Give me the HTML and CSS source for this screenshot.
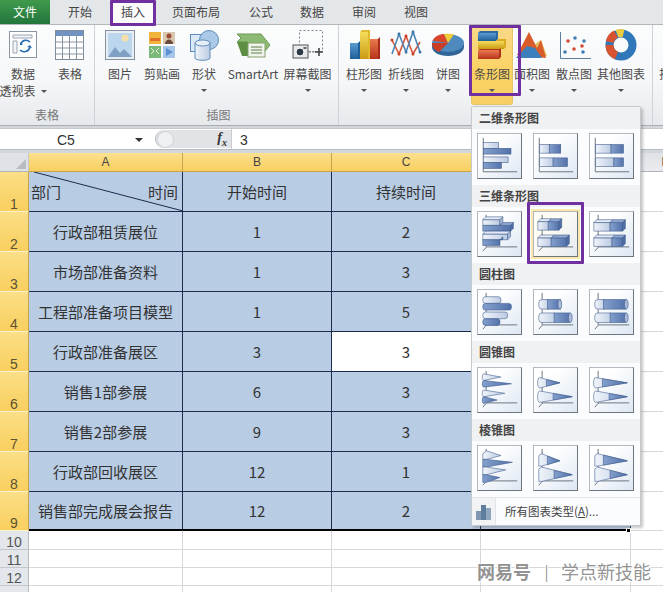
FILE: index.html
```html
<!DOCTYPE html>
<html lang="zh-CN">
<head>
<meta charset="utf-8">
<title>Excel 插入条形图</title>
<link rel="stylesheet" href="styles.css">
</head>
<body>
<svg class="defs" aria-hidden="true">
  <defs>
    <linearGradient id="gl" x1="0" y1="0" x2="1" y2="0"><stop offset="0" stop-color="#f0f4fa"/><stop offset="1" stop-color="#bccbe3"/></linearGradient>
    <linearGradient id="gd" x1="0" y1="0" x2="1" y2="0"><stop offset="0" stop-color="#84a0cd"/><stop offset="1" stop-color="#5372aa"/></linearGradient>
    <linearGradient id="gy" x1="0" y1="0" x2="0" y2="1"><stop offset="0" stop-color="#f6dc5c"/><stop offset="1" stop-color="#c99b12"/></linearGradient>
    <linearGradient id="gb" x1="0" y1="0" x2="0" y2="1"><stop offset="0" stop-color="#5b9bd0"/><stop offset="1" stop-color="#1f5f99"/></linearGradient>
    <linearGradient id="gr" x1="0" y1="0" x2="0" y2="1"><stop offset="0" stop-color="#ea7a4e"/><stop offset="1" stop-color="#b8321a"/></linearGradient>
    <symbol id="ax2" viewBox="0 0 45 46"><path d="M5.500 4V39.500H41" fill="none" stroke="#66717f"/></symbol>
    <symbol id="ax3" viewBox="0 0 45 46"><path d="M8.500 3V36.500M5 41l4-4.500H41" fill="none" stroke="#66717f"/></symbol>

    <symbol id="c3a" viewBox="0 0 45 46">
      <g stroke="#3f5b8c" stroke-width=".6">
        <path d="M5 8h18v6H5z" fill="url(#gl)"/><path d="M5 8l3-3h18l-3 3z" fill="#e3eaf5"/><path d="M23 8l3-3v6l-3 3z" fill="#a9bbd8"/>
        <path d="M5 14h29v6H5z" fill="url(#gd)"/><path d="M23 14l3-3h11l-3 3z" fill="#8ea7d0"/><path d="M34 14l3-3v6l-3 3z" fill="#4f6ea6"/>
        <path d="M5 23h26v6H5z" fill="url(#gl)"/><path d="M5 23l3-3h26l-3 3z" fill="#e3eaf5"/><path d="M31 23l3-3v6l-3 3z" fill="#a9bbd8"/>
        <path d="M5 29h18v6H5z" fill="url(#gd)"/><path d="M23 29l3-3v3z" fill="#4f6ea6"/>
      </g>
    </symbol>
    <symbol id="c3b" viewBox="0 0 45 46">
      <g stroke="#3f5b8c" stroke-width=".6">
        <path d="M4 10h11v9H4z" fill="url(#gl)"/><path d="M4 10l3-3h11l-3 3z" fill="#e3eaf5"/>
        <path d="M15 10h11v9H15z" fill="url(#gd)"/><path d="M15 10l3-3h11l-3 3z" fill="#8ea7d0"/><path d="M26 10l3-3v9l-3 3z" fill="#4f6ea6"/>
        <path d="M4 27h14v9H4z" fill="url(#gl)"/><path d="M4 27l3-3h14l-3 3z" fill="#e3eaf5"/>
        <path d="M18 27h16v9H18z" fill="url(#gd)"/><path d="M18 27l3-3h16l-3 3z" fill="#8ea7d0"/><path d="M34 27l3-3v9l-3 3z" fill="#4f6ea6"/>
      </g>
    </symbol>
    <symbol id="c3c" viewBox="0 0 45 46">
      <g stroke="#3f5b8c" stroke-width=".6">
        <path d="M4 11h17v9H4z" fill="url(#gl)"/><path d="M4 11l3-3h17l-3 3z" fill="#e3eaf5"/>
        <path d="M21 11h13v9H21z" fill="url(#gd)"/><path d="M21 11l3-3h13l-3 3z" fill="#8ea7d0"/><path d="M34 11l3-3v9l-3 3z" fill="#4f6ea6"/>
        <path d="M4 27h19v9H4z" fill="url(#gl)"/><path d="M4 27l3-3h19l-3 3z" fill="#e3eaf5"/>
        <path d="M23 27h11v9H23z" fill="url(#gd)"/><path d="M23 27l3-3h11l-3 3z" fill="#8ea7d0"/><path d="M34 27l3-3v9l-3 3z" fill="#4f6ea6"/>
      </g>
    </symbol>
  </defs>
</svg>

<div class="app">
  <nav class="tabs">
    <span class="tab tab-file">文件</span>
    <span class="tab tab-60">开始</span>
    <span class="tab tab-active">插入</span>
    <span class="tab tab-80">页面布局</span>
    <span class="tab tab-50">公式</span>
    <span class="tab tab-52">数据</span>
    <span class="tab tab-52">审阅</span>
    <span class="tab tab-52">视图</span>
  </nav>

  <section class="ribbon">
    <div class="group group-table">
      <div class="btns">
        <div class="btn w46">
          <svg class="ico" viewBox="0 0 34 34"><rect x="3.500" y="3.500" width="27" height="26" fill="#fff" stroke="#8b96a3"/><path d="M7 7h19v3H7zM7 13h4v12H7z" fill="#f3f5f8" stroke="#9aa5b1"/><path d="M14 22c3 3 9 2 10-3M24 14c-3-3-8-2-9 2" fill="none" stroke="#2a6fb3" stroke-width="1.600"/><path d="M21 19l3-2 2 3zM17 17l-3 0 0-3z" fill="#2a6fb3"/></svg>
          <span class="lbl">数据</span>
          <span class="lbl">透视表<i class="caret caret-inline"></i></span>
        </div>
        <div class="btn w48">
          <svg class="ico" viewBox="0 0 34 34"><rect x="2.500" y="2.500" width="28" height="29" fill="#fff" stroke="#7f8c99"/><rect x="3" y="3" width="27" height="5" fill="#6f93c4"/><path d="M2.500 14h28M2.500 20h28M2.500 26h28M9.500 3v28M16.500 3v28M23.500 3v28" stroke="#8a96a3" fill="none"/></svg>
          <span class="lbl">表格</span>
        </div>
      </div>
      <div class="group-name">表格</div>
    </div>

    <div class="group group-art">
      <div class="btns">
        <div class="btn w42">
          <svg class="ico" viewBox="0 0 34 34"><rect x="2.500" y="2.500" width="29" height="29" fill="#e9eef3" stroke="#8792a0"/><rect x="5" y="5" width="24" height="24" fill="#bcd6ee"/><circle cx="22" cy="10" r="3.500" fill="#f4dfa8"/><path d="M5 29l7-10 5 6 4-4 8 8z" fill="#7ea0c4"/></svg>
          <span class="lbl">图片</span>
        </div>
        <div class="btn w42">
          <svg class="ico" viewBox="0 0 34 34"><rect x="4" y="4" width="12" height="12" fill="#f2b53c"/><path d="M5 10h10v3H5z" fill="#e2702a"/><rect x="18" y="4" width="12" height="12" fill="#d9c7b0"/><circle cx="24" cy="8" r="2.500" fill="#9c4a30"/><path d="M20 16c0-6 8-6 8 0z" fill="#6a4a3c"/><rect x="4" y="18" width="12" height="12" fill="#7cb87a"/><path d="M6 20l3 3-3 3M14 20l-3 3 3 3" stroke="#e6f2d8" fill="none"/><rect x="18" y="18" width="12" height="12" fill="#a7c5ea"/><path d="M21 20l7 4-7 4z" fill="#5b8fd0"/></svg>
          <span class="lbl">剪贴画</span>
        </div>
        <div class="btn w42">
          <svg class="ico" viewBox="0 0 34 34"><rect x="3.500" y="6.500" width="17" height="17" fill="#dbe8f5" stroke="#5e8cba"/><circle cx="22" cy="12" r="9.500" fill="#a9c9e6" stroke="#5e8cba"/><path d="M8 15v15c0 3 15 3 15 0V15z" fill="url(#gl)" stroke="#5e8cba"/><ellipse cx="15.500" cy="15" rx="7.500" ry="3" fill="#e7f0f8" stroke="#5e8cba"/></svg>
          <span class="lbl">形状</span>
          <i class="caret"></i>
        </div>
        <div class="btn w56">
          <svg class="ico ico-wide" viewBox="0 0 38 34"><path d="M3 6h24l9 11-9 11H14V14H3l4-4z" fill="#8dba72" stroke="#6d9a55"/><path d="M3 14h11v14H8z" fill="#5c8f44"/><rect x="14" y="15" width="17" height="14" fill="#f1f4ec" stroke="#84a06e"/><path d="M17 19h11M17 22h11M17 25h11" stroke="#5b7f49"/></svg>
          <span class="lbl">SmartArt</span>
        </div>
        <div class="btn w53">
          <svg class="ico" viewBox="0 0 34 34"><rect x="8.500" y="2.500" width="23" height="21" fill="none" stroke="#7d8894" stroke-dasharray="2 2"/><rect x="2" y="17" width="15" height="13" fill="#e5e8ec" stroke="#555"/><circle cx="9" cy="24" r="4" fill="#2f3a48" stroke="#fff"/><rect x="12.500" y="19" width="3" height="2" fill="#666"/><path d="M18 24h7" stroke="#777" stroke-dasharray="2 1"/><path d="M28 20v8M24 24h8" stroke="#444" stroke-width="1.600"/></svg>
          <span class="lbl">屏幕截图</span>
          <i class="caret"></i>
        </div>
      </div>
      <div class="group-name">插图</div>
    </div>

    <div class="group group-chart">
      <div class="btns">
        <div class="btn w42">
          <svg class="ico" viewBox="0 0 34 34"><path d="M3 15h8v16H3z" fill="url(#gb)"/><path d="M11 15l2-2v18h-2z" fill="#1f5f99"/><path d="M13 4h8v27h-8z" fill="url(#gy)"/><path d="M13 4l2-2h8l-2 2zM21 4l2-2v29h-2z" fill="#e0b92a"/><path d="M23 11h8v20h-8z" fill="url(#gr)"/><path d="M31 11l2-2v22h-2z" fill="#a52c15"/></svg>
          <span class="lbl">柱形图</span>
          <i class="caret"></i>
        </div>
        <div class="btn w42">
          <svg class="ico" viewBox="0 0 34 34"><path d="M3 12l7 14 7-18 7 18 7-12" fill="none" stroke="#d8543a" stroke-width="1.600"/><path d="M3 26l7-20 7 18 7-20 7 20" fill="none" stroke="#4c86b5" stroke-width="1.600"/><g fill="#3d78a8"><circle cx="10" cy="6" r="1.500"/><circle cx="24" cy="4" r="1.500"/><circle cx="17" cy="24" r="1.500"/><circle cx="31" cy="24" r="1.500"/></g><g fill="#c83f28"><circle cx="3" cy="12" r="1.500"/><circle cx="17" cy="8" r="1.500"/><circle cx="10" cy="26" r="1.500"/><circle cx="24" cy="26" r="1.500"/></g></svg>
          <span class="lbl">折线图</span>
          <i class="caret"></i>
        </div>
        <div class="btn w42">
          <svg class="ico" viewBox="0 0 34 34"><path d="M1 19c0 5 7 9 16 9s16-4 16-9v-3H1z" fill="#2e6498"/><ellipse cx="17" cy="15" rx="16" ry="9" fill="#4f8abf"/><path d="M17 15L1.600 12.800C3 8.500 9 6 13 6z" fill="#d8472a"/><path d="M17 15L13 6c3-.5 7-.5 10 .2z" fill="#efcb3a"/><path d="M1 15c0 4 2 7 7 9l9-9z" fill="#c93e24"/></svg>
          <span class="lbl">饼图</span>
          <i class="caret"></i>
        </div>
        <div class="btn w42 btn-on">
          <svg class="ico" viewBox="0 0 34 34"><path d="M3 5h18v8H3z" fill="url(#gb)"/><path d="M3 5l2-2h18l-2 2zM21 5l2-2v8l-2 2z" fill="#2c6ba4"/><path d="M3 13h26v8H3z" fill="url(#gy)"/><path d="M21 13l2-2h8l-2 2zM29 13l2-2v8l-2 2z" fill="#d8ae20"/><path d="M3 22h21v9H3z" fill="url(#gr)"/><path d="M24 22l2-2v9l-2 2zM3 22l2-1h21l-2 1z" fill="#b13218"/></svg>
          <span class="lbl">条形图</span>
          <i class="caret"></i>
        </div>
        <div class="btn w42">
          <svg class="ico" viewBox="0 0 34 34"><path d="M20 16l6-4 6 16-8 1z" fill="#e0c05a"/><path d="M2 27L14 4l8 16 4-8 5 18z" fill="#d95a2a"/><path d="M1 30l11-12 8 2 7 10z" fill="#3d7fbc"/></svg>
          <span class="lbl">面积图</span>
          <i class="caret"></i>
        </div>
        <div class="btn w42">
          <svg class="ico" viewBox="0 0 34 34"><path d="M3.500 4v26.500H34" fill="none" stroke="#5d7f9e"/><g fill="#d04a30"><circle cx="11" cy="13" r="1.800"/><circle cx="17" cy="21" r="1.800"/><circle cx="25" cy="18" r="1.800"/></g><g fill="#3f7fb4"><circle cx="8" cy="24" r="1.800"/><circle cx="18" cy="10" r="1.800"/><circle cx="27" cy="13" r="1.800"/><circle cx="26" cy="24" r="1.800"/></g></svg>
          <span class="lbl">散点图</span>
          <i class="caret"></i>
        </div>
        <div class="btn w52">
          <svg class="ico" viewBox="0 0 34 34"><circle cx="17" cy="17" r="11.500" fill="none" stroke="#2f77b8" stroke-width="8"/><path d="M5.500 17a11.500 11.500 0 0 0 7 10.500" fill="none" stroke="#d8532f" stroke-width="8"/><path d="M5.800 14a11.500 11.500 0 0 1 6-8" fill="none" stroke="#d8532f" stroke-width="8"/><path d="M13 5.800a11.500 11.500 0 0 1 6.500-.4" fill="none" stroke="#eccb3e" stroke-width="8"/></svg>
          <span class="lbl">其他图表</span>
          <i class="caret"></i>
        </div>
      </div>
    </div>
    <div class="group group-next"><span class="lbl">折线图</span></div>
  </section>

  <div class="formula">
    <div class="namebox"><span class="name">C5</span><i class="caret caret-dark"></i></div>
    <div class="fx-pill"><span class="fx-dot"></span><span class="fx">f<sub>x</sub></span></div>
    <div class="fx-input">3</div>
  </div>

  <div class="sheet">
    <div class="corner"></div>
    <div class="col on">A</div><div class="col on">B</div><div class="col on">C</div><div class="col on">D</div><div class="col">E</div>

    <div class="rowh on">1</div>
    <div class="cell cell-diag"><svg class="diag" viewBox="0 0 154 40" preserveAspectRatio="none"><path d="M5 0L154 39" stroke="#1d2a4c" fill="none"/></svg><span>部门</span><span>时间</span></div>
    <div class="cell">开始时间</div><div class="cell">持续时间</div><div class="cell"></div><div class="blank"></div>

    <div class="rowh on">2</div>
    <div class="cell">行政部租赁展位</div><div class="cell">1</div><div class="cell">2</div><div class="cell"></div><div class="blank"></div>

    <div class="rowh on">3</div>
    <div class="cell">市场部准备资料</div><div class="cell">1</div><div class="cell">3</div><div class="cell"></div><div class="blank"></div>

    <div class="rowh on">4</div>
    <div class="cell">工程部准备项目模型</div><div class="cell">1</div><div class="cell">5</div><div class="cell"></div><div class="blank"></div>

    <div class="rowh on">5</div>
    <div class="cell">行政部准备展区</div><div class="cell">3</div><div class="cell cell-sel">3</div><div class="cell"></div><div class="blank"></div>

    <div class="rowh on">6</div>
    <div class="cell">销售1部参展</div><div class="cell">6</div><div class="cell">3</div><div class="cell"></div><div class="blank"></div>

    <div class="rowh on">7</div>
    <div class="cell">销售2部参展</div><div class="cell">9</div><div class="cell">3</div><div class="cell"></div><div class="blank"></div>

    <div class="rowh on">8</div>
    <div class="cell">行政部回收展区</div><div class="cell">12</div><div class="cell">1</div><div class="cell"></div><div class="blank"></div>

    <div class="rowh on">9</div>
    <div class="cell cell-last">销售部完成展会报告</div><div class="cell cell-last">12</div><div class="cell cell-last">2</div><div class="cell cell-last"></div><div class="blank"></div>

    <div class="rowh">10</div><div class="blank"></div><div class="blank"></div><div class="blank"></div><div class="blank"></div><div class="blank"></div>
    <div class="rowh">11</div><div class="blank"></div><div class="blank"></div><div class="blank"></div><div class="blank"></div><div class="blank"></div>
    <div class="rowh">12</div><div class="blank"></div><div class="blank"></div><div class="blank"></div><div class="blank"></div><div class="blank"></div>
    <div class="rowh rowh-13">13</div><div class="blank"></div><div class="blank"></div><div class="blank"></div><div class="blank"></div><div class="blank"></div>
  </div>

  <span class="handle"></span>

  <div class="menu">
    <div class="menu-head">二维条形图</div>
    <div class="gallery">
      <div class="gbtn"><svg viewBox="0 0 45 46"><use href="#ax2"/><g stroke="#3f5b8c" stroke-width=".6"><rect x="5.500" y="9" width="16" height="6" fill="url(#gl)"/><rect x="5.500" y="15" width="29" height="6" fill="url(#gd)"/><rect x="5.500" y="24" width="26" height="6" fill="url(#gl)"/><rect x="5.500" y="30" width="19" height="6" fill="url(#gd)"/></g></svg></div>
      <div class="gbtn"><svg viewBox="0 0 45 46"><use href="#ax2"/><g stroke="#3f5b8c" stroke-width=".6"><rect x="6" y="11" width="10" height="9" fill="url(#gl)"/><rect x="16" y="11" width="12" height="9" fill="url(#gd)"/><rect x="6" y="25" width="14" height="9" fill="url(#gl)"/><rect x="20" y="25" width="15" height="9" fill="url(#gd)"/></g></svg></div>
      <div class="gbtn"><svg viewBox="0 0 45 46"><use href="#ax2"/><g stroke="#3f5b8c" stroke-width=".6"><rect x="6" y="11" width="16" height="9" fill="url(#gl)"/><rect x="22" y="11" width="13" height="9" fill="url(#gd)"/><rect x="6" y="25" width="19" height="9" fill="url(#gl)"/><rect x="25" y="25" width="10" height="9" fill="url(#gd)"/></g></svg></div>
    </div>
    <div class="menu-head">三维条形图</div>
    <div class="gallery">
      <div class="gbtn"><svg viewBox="0 0 45 46"><use href="#ax3"/><use href="#c3a"/></svg></div>
      <div class="gbtn gbtn-hot"><svg viewBox="0 0 45 46"><use href="#ax3"/><use href="#c3b"/></svg></div>
      <div class="gbtn"><svg viewBox="0 0 45 46"><use href="#ax3"/><use href="#c3c"/></svg></div>
    </div>
    <div class="menu-head">圆柱图</div>
    <div class="gallery">
      <div class="gbtn"><svg viewBox="0 0 45 46"><use href="#ax3"/><g stroke="#3f5b8c" stroke-width=".6"><rect x="5" y="7" width="19" height="7" rx="3" fill="url(#gl)"/><rect x="5" y="14" width="30" height="7" rx="3" fill="url(#gd)"/><rect x="5" y="23" width="26" height="7" rx="3" fill="url(#gl)"/><rect x="5" y="30" width="18" height="7" rx="3" fill="url(#gd)"/></g></svg></div>
      <div class="gbtn"><svg viewBox="0 0 45 46"><use href="#ax3"/><g stroke="#3f5b8c" stroke-width=".6"><rect x="5" y="10" width="12" height="10" rx="3.500" fill="url(#gl)"/><rect x="14" y="10" width="14" height="10" fill="url(#gd)"/><ellipse cx="27" cy="15" rx="2" ry="5" fill="#a9bbd8"/><rect x="5" y="24" width="19" height="10" rx="3.500" fill="url(#gl)"/><rect x="21" y="24" width="17" height="10" fill="url(#gd)"/><ellipse cx="38" cy="29" rx="2" ry="5" fill="#a9bbd8"/></g></svg></div>
      <div class="gbtn"><svg viewBox="0 0 45 46"><use href="#ax3"/><g stroke="#3f5b8c" stroke-width=".6"><rect x="5" y="10" width="12" height="10" rx="3.500" fill="url(#gl)"/><rect x="14" y="10" width="24" height="10" fill="url(#gd)"/><ellipse cx="38" cy="15" rx="2" ry="5" fill="#a9bbd8"/><rect x="5" y="24" width="19" height="10" rx="3.500" fill="url(#gl)"/><rect x="21" y="24" width="17" height="10" fill="url(#gd)"/><ellipse cx="38" cy="29" rx="2" ry="5" fill="#a9bbd8"/></g></svg></div>
    </div>
    <div class="menu-head">圆锥图</div>
    <div class="gallery">
      <div class="gbtn"><svg viewBox="0 0 45 46"><use href="#ax3"/><g stroke="#3f5b8c" stroke-width=".6"><path d="M6 6c-2 0-2 7 0 7L24 9.500z" fill="url(#gl)"/><path d="M6 13c-2 0-2 7 0 7L35 16.500z" fill="url(#gd)"/><path d="M6 23c-2 0-2 7 0 7L28 26.500z" fill="url(#gl)"/><path d="M6 30c-2 0-2 7 0 7L20 33.500z" fill="url(#gd)"/></g></svg></div>
      <div class="gbtn"><svg viewBox="0 0 45 46"><use href="#ax3"/><g stroke="#3f5b8c" stroke-width=".6"><path d="M6 10c-3 0-3 11 0 11L27 15.500z" fill="url(#gl)"/><path d="M13 12.100L27 15.500 13 18.900z" fill="url(#gd)"/><path d="M6 24c-3 0-3 12 0 12L40 30z" fill="url(#gl)"/><path d="M20 26.600L40 30 20 33.400z" fill="url(#gd)"/></g></svg></div>
      <div class="gbtn"><svg viewBox="0 0 45 46"><use href="#ax3"/><g stroke="#3f5b8c" stroke-width=".6"><path d="M6 10c-3 0-3 11 0 11L39 15.500z" fill="url(#gl)"/><path d="M13 11.300L39 15.500 13 19.700z" fill="url(#gd)"/><path d="M6 24c-3 0-3 12 0 12L39 30z" fill="url(#gl)"/><path d="M20 26.600L39 30 20 33.400z" fill="url(#gd)"/></g></svg></div>
    </div>
    <div class="menu-head">棱锥图</div>
    <div class="gallery">
      <div class="gbtn"><svg viewBox="0 0 45 46"><use href="#ax3"/><g stroke="#3f5b8c" stroke-width=".6"><path d="M5 8l4-3 15 5-15 4H5z" fill="url(#gl)"/><path d="M5 14h4l27 3-27 5H5z" fill="url(#gd)"/><path d="M5 22h4l20 3-20 5H5z" fill="url(#gl)"/><path d="M5 30h4l14 3-14 5H5z" fill="url(#gd)"/></g></svg></div>
      <div class="gbtn"><svg viewBox="0 0 45 46"><use href="#ax3"/><g stroke="#3f5b8c" stroke-width=".6"><path d="M5 10l3-2 19 7.500L8 21H5z" fill="url(#gl)"/><path d="M14 10.500L27 15.500 14 19.500z" fill="url(#gd)"/><path d="M5 24l3-2 32 8-32 7H5z" fill="url(#gl)"/><path d="M21 25.500L40 30 21 34z" fill="url(#gd)"/></g></svg></div>
      <div class="gbtn"><svg viewBox="0 0 45 46"><use href="#ax3"/><g stroke="#3f5b8c" stroke-width=".6"><path d="M5 10l3-2 31 7.500L8 21H5z" fill="url(#gl)"/><path d="M14 9.500L39 15.500 14 20z" fill="url(#gd)"/><path d="M5 24l3-2 31 8-31 7H5z" fill="url(#gl)"/><path d="M21 25.500L39 30 21 34z" fill="url(#gd)"/></g></svg></div>
    </div>
    <div class="menu-foot">
      <span class="foot-ico"><svg viewBox="0 0 18 18"><rect x="1" y="8" width="5" height="9" fill="#7f97b0"/><rect x="6" y="2" width="5" height="15" fill="#5f7d9c"/><rect x="11" y="5" width="5" height="12" fill="#8fa6bd"/></svg></span>
      <span class="foot-text">所有图表类型(<u>A</u>)...</span>
    </div>
  </div>

  <span class="mark mark-tab"></span>
  <span class="mark mark-bar"></span>
  <span class="mark mark-gallery"></span>

  <div class="watermark"><b class="wm-name">网易号</b><span class="wm-sep">|</span><span class="wm-sub">学点新技能</span></div>
</div>
</body>
</html>
```

FILE: styles.css
```css
* { box-sizing: border-box; }
html, body { margin: 0; padding: 0; }
body { width: 663px; height: 592px; overflow: hidden; background: #fff; font-family: "Noto Sans CJK SC", "Liberation Sans", sans-serif; color: #333; }
.defs { position: absolute; width: 0; height: 0; }
.app { position: relative; width: 663px; height: 592px; overflow: hidden; display: flex; flex-direction: column; background: #d3d7db; }

/* tabs */
.tabs { display: flex; height: 25px; flex: none; background: #e4e7ea; border-bottom: 1px solid #b3b7bb; font-size: 12px; color: #444; }
.tab { display: flex; align-items: center; justify-content: center; height: 24px; padding-bottom: 2px; }
.tab-file { width: 50px; color: #fff; background: linear-gradient(#3f9a4c, #22763a); }
.tab-60 { width: 60px; }
.tab-active { width: 46px; background: #fbfbfc; height: 25px; padding-bottom: 3px; }
.tab-80 { width: 80px; }
.tab-50 { width: 50px; }
.tab-52 { width: 52px; }

/* ribbon */
.ribbon { display: flex; height: 101px; flex: none; background: linear-gradient(#fbfcfc 0, #f6f7f9 55%, #e6e9ec 100%); border-bottom: 1px solid #a9adb2; overflow: hidden; font-size: 12px; color: #4a4a4a; }
.group { display: flex; flex-direction: column; flex: none; border-right: 1px solid #cfd3d7; }
.group-table { width: 95px; }
.group-art { width: 244px; padding-left: 4px; }
.group-chart { width: 314px; padding-left: 4px; }
.group-next { width: 60px; padding: 40px 0 0 6px; border: 0; }
.btns { display: flex; height: 81px; }
.group-name { height: 19px; text-align: center; color: #777; line-height: 18px; }
.btn { display: flex; flex-direction: column; align-items: center; padding-top: 3px; flex: none; }
.btn-on { background: linear-gradient(#f9d98a, #fbd262 60%, #f7cf66); height: 80px; width: 42px; margin-left: 2px; margin-right: -2px; border-radius: 0 0 3px 3px; border: 1px solid #e5c468; border-top: 0; }
.w42 { width: 42px; }
.w46 { width: 46px; }
.w48 { width: 48px; }
.w52 { width: 52px; }
.w53 { width: 53px; }
.w56 { width: 56px; }
.ico { width: 34px; height: 34px; flex: none; margin-bottom: 3px; }
.ico-wide { width: 38px; }
.lbl { display: block; white-space: nowrap; line-height: 17px; height: 17px; }
.caret { display: block; width: 0; height: 0; margin-top: 7px; border: 3px solid transparent; border-top: 3.500px solid #555; border-bottom: 0; }
.caret-inline { display: inline-block; margin: 0 0 2px 5px; vertical-align: middle; }
.caret-dark { border-width: 4px; border-top-color: #333; border-bottom: 0; margin-top: 0; }

/* formula bar */
.formula { display: flex; height: 22px; flex: none; margin-top: 2px; background: #fff; border-top: 1px solid #c5c9cd; border-bottom: 1px solid #b8bcc0; font-size: 14px; color: #333; align-items: stretch; }
.namebox { width: 155px; position: relative; display: flex; align-items: center; padding-left: 57px; padding-top: 2px; gap: 58px; font-family: "Liberation Sans", sans-serif; }
.name { width: 20px; }
.fx-pill { width: 76px; margin: 1px 0; display: flex; align-items: center; justify-content: space-between; padding: 0 4px 0 1px; background: #e1e3e6; border-radius: 10px 0 0 10px; border-left: 1px solid #b8bcc0; }
.fx-dot { width: 17px; height: 17px; border-radius: 50%; background: #eef0f2; border: 1px solid #d0d3d7; }
.fx { font-family: "Liberation Serif", serif; font-style: italic; font-weight: bold; font-size: 14px; color: #333; line-height: 1; }
.fx sub { font-size: 10px; }
.fx-input { flex: 1; padding: 1px 0 0 8px; border-left: 1px solid #c9ccd0; line-height: 20px; font-family: "Liberation Sans", sans-serif; }

/* sheet */
.sheet { display: grid; flex: none; margin-top: 3px; width: 701px; grid-template-columns: 29px 154px 149px 149px 150px 70px; grid-template-rows: 19px 40px repeat(7, 40px) 39px 19px 18px 18px 24px; font-size: 15px; color: #333; }
.corner { background: #dfe2e6; border-right: 1px solid #c3c6ca; border-bottom: 1px solid #b0b3b7; position: relative; }
.corner::after { content: ""; position: absolute; right: 2px; bottom: 2px; border: 5px solid transparent; border-right-color: #b8bcc1; border-bottom-color: #b8bcc1; }
.col { background: linear-gradient(#dfe2e6, #e9ebee); border-right: 1px solid #b8bcc0; border-bottom: 1px solid #b0b3b7; text-align: center; font: 12px/19px "Liberation Sans", sans-serif; color: #444; }
.col.on { background: linear-gradient(#fbe08e, #f8cf60); border-right-color: #c9a24a; border-bottom-color: #c9a24a; }
.rowh { background: #e3e6ea; border-right: 1px solid #b8bcc0; border-bottom: 1px solid #c4c7cb; text-align: center; font: 14px/14px "Liberation Sans", sans-serif; color: #555; display: flex; align-items: flex-end; justify-content: center; }
.rowh-13 { align-items: flex-start; padding-top: 4px; }
.rowh.on { background: linear-gradient(#fbdf87, #f9cf5e); border-bottom-color: #fdf4cf; border-right-color: #c9a24a; color: #5c5233; }
.cell { background: #b8cce4; border-right: 1px solid #1d2a4c; border-bottom: 1px solid #1d2a4c; display: flex; align-items: center; justify-content: center; white-space: nowrap; }
.cell-diag { position: relative; justify-content: space-between; padding: 0 4px 0 2px; }
.cell-sel { background: #fff; }
.cell-last { border-bottom: 2px solid #000; }
.diag { position: absolute; left: 0; top: 0; width: 154px; height: 40px; }
.blank { background: #fff; border-right: 1px solid #d6d8da; border-bottom: 1px solid #d6d8da; }
.handle { position: absolute; left: 626px; top: 528px; width: 5px; height: 5px; background: #000; border: 1px solid #fff; }

/* menu */
.menu { position: absolute; left: 471px; top: 106px; width: 170px; height: 420px; background: #fbfcfd; border: 1px solid #c6cacf; border-radius: 2px; box-shadow: 2px 2px 3px rgba(90, 90, 90, .35); display: flex; flex-direction: column; }
.menu-head { height: 22px; flex: none; padding-left: 7px; background: #eff1f3; font-size: 12px; font-weight: 700; line-height: 21px; color: #444; }
.gallery { display: flex; gap: 11px; height: 56px; flex: none; padding: 4px 0 0 5px; }
.gbtn { width: 45px; height: 46px; flex: none; background: linear-gradient(135deg, #fff 30%, #dde7f2); border: 1px solid #b3b9c0; border-right-color: #6e7680; border-bottom-color: #6e7680; }
.gbtn svg { display: block; width: 43px; height: 44px; }
.gbtn-hot { background: linear-gradient(135deg, #fffdf4 30%, #e6ebf2); outline: 2px solid #fbe6ac; }
.menu-foot { flex: 1; display: flex; border-top: 1px solid #e3e5e8; font-size: 11.500px; color: #444; }
.foot-ico { width: 24px; background: #f2f3f5; border-right: 1px solid #e2e4e7; display: flex; align-items: center; justify-content: center; }
.foot-ico svg { width: 18px; height: 18px; }
.foot-text { padding-left: 9px; line-height: 27px; white-space: nowrap; }

/* purple annotations */
.mark { position: absolute; border: 3px solid #7030a0; border-radius: 1px; pointer-events: none; }
.mark-tab { left: 110px; top: 0; width: 46px; height: 26px; }
.mark-bar { left: 469px; top: 25px; width: 52px; height: 71px; }
.mark-gallery { left: 527px; top: 202px; width: 57px; height: 62px; }

/* watermark */
.watermark { position: absolute; left: 477px; top: 559px; display: flex; align-items: center; height: 24px; color: #939393; font-size: 18px; text-shadow: 1px 1px 0 #fff, -1px -1px 0 #fff, 1px -1px 0 #fff, -1px 1px 0 #fff; white-space: nowrap; }
.wm-name { font-weight: 700; width: 55px; }
.wm-sep { width: 29px; text-align: center; font-size: 15px; }
.wm-sub { letter-spacing: 0; }
```
